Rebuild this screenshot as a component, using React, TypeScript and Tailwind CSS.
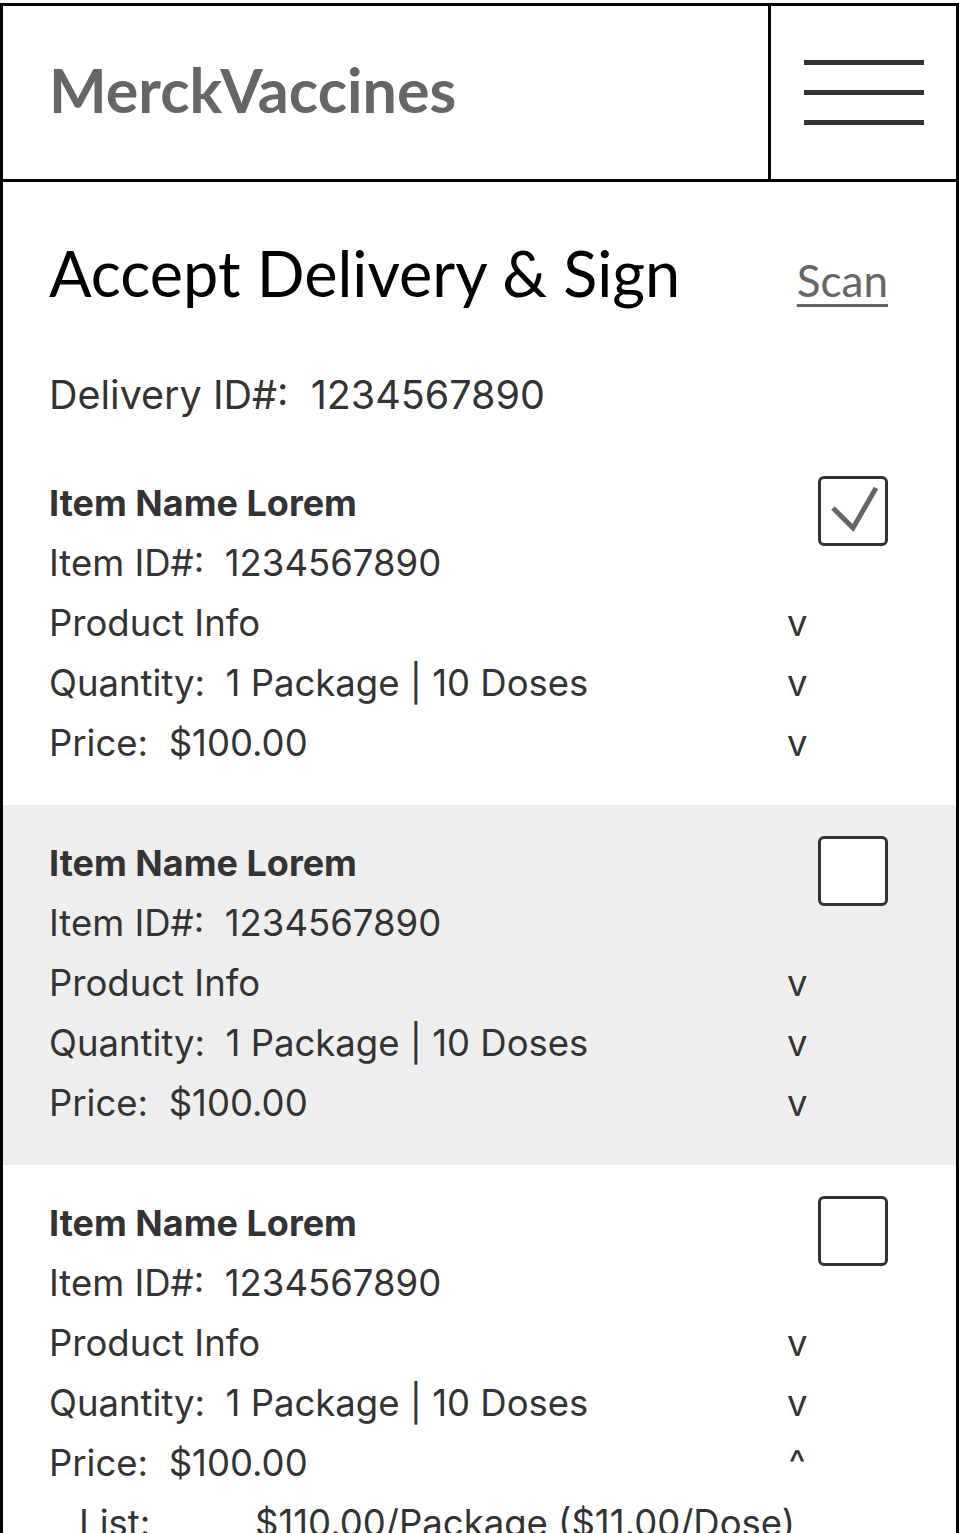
import React from "react";

const items = [
  { checked: true, bg: "bg-white", open: false },
  { checked: false, bg: "bg-[#eeeeee]", open: false },
  { checked: false, bg: "bg-white", open: true },
];

const Checkbox = ({ checked }: { checked: boolean }) => (
  <div className="mt-[3px] h-[70px] w-[70px] shrink-0 self-start rounded-[6px] border-[3px] border-[#333333] bg-white">
    {checked && (
      <svg width="64" height="64" viewBox="0 0 64 64">
        <polyline points="12,29 32,49 55,9" fill="none" stroke="#666666" strokeWidth="5" />
      </svg>
    )}
  </div>
);

const Row = ({
  label,
  chevron,
  bold,
  right,
}: {
  label: React.ReactNode;
  chevron?: string;
  bold?: boolean;
  right?: React.ReactNode;
}) => (
  <div className="flex h-[60px] items-center">
    <div className={`flex-1 ${bold ? "text-[36px] font-bold" : ""}`}>{label}</div>
    <div className="w-[20px] text-center">{chevron}</div>
    <div className="flex h-full w-[81px] justify-end">{right}</div>
  </div>
);

export default function App() {
  return (
    <div className="h-[1533px] w-[959px] overflow-hidden bg-white pt-[3px]">
      <div className="h-[1533px] border-[3px] border-black">
        {/* header */}
        <div className="flex h-[176px] border-b-[3px] border-black">
          <div className="flex flex-1 items-center pb-[6px] pl-[46px]">
            <span className="font-['Lato',sans-serif] text-[61px] font-bold text-[#666666]">MerckVaccines</span>
          </div>
          <div className="flex w-[188px] flex-col items-center justify-center gap-[25px] border-l-[3px] border-black">
            <div className="h-[5px] w-[120px] bg-[#333333]" />
            <div className="h-[5px] w-[120px] bg-[#333333]" />
            <div className="h-[5px] w-[120px] bg-[#333333]" />
          </div>
        </div>

        {/* title */}
        <div className="mt-[55px] flex items-baseline justify-between pl-[46px] pr-[68px]">
          <h1 className="font-['Lato',sans-serif] text-[63px] leading-[72px] text-black">Accept Delivery &amp; Sign</h1>
          <a className="font-['Lato',sans-serif] text-[44px] text-[#666666] underline decoration-[3px] underline-offset-[7px]">
            Scan
          </a>
        </div>

        <div className="font-['Inter',sans-serif] text-[36.5px] text-[#333333]">
          <div className="mt-[53px] flex h-[60px] items-center pl-[46px] text-[39.5px]">Delivery ID#:&nbsp; 1234567890</div>

          <div className="mt-[19px]">
            {items.map((item, i) => (
              <div key={i} className={`${item.bg} pb-[32px] pl-[46px] pr-[68px] pt-[28px]`}>
                <Row label="Item Name Lorem" bold right={<Checkbox checked={item.checked} />} />
                <Row label={<>Item ID#:&nbsp; 1234567890</>} />
                <Row label="Product Info" chevron="v" />
                <Row label={<>Quantity:&nbsp; 1 Package | 10 Doses</>} chevron="v" />
                <Row label={<>Price:&nbsp; $100.00</>} chevron={item.open ? "^" : "v"} />
                {item.open && (
                  <div className="flex h-[60px] items-center pl-[30px]">
                    <span className="w-[176px]">List:</span>
                    <span>$110.00/Package ($11.00/Dose)</span>
                  </div>
                )}
              </div>
            ))}
          </div>
        </div>
      </div>
    </div>
  );
}
